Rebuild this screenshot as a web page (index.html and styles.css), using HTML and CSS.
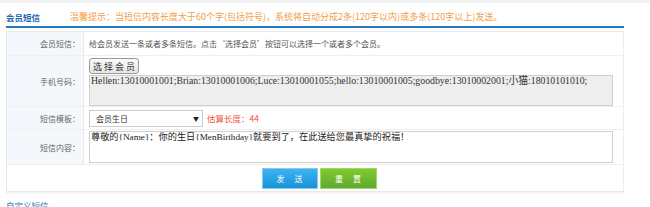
FILE: index.html
```html
<!DOCTYPE html>
<html lang="zh-CN">
<head>
<meta charset="utf-8">
<title>会员短信</title>
<link rel="stylesheet" href="styles.css">
</head>
<body>
<div class="topstrip"></div>
<div class="page">
  <div class="head">
    <span class="head-title">会员短信</span>
    <span class="head-tip">温馨提示：当短信内容长度大于60个字(包括符号)，系统将自动分成2条(120字以内)或多条(120字以上)发送。</span>
  </div>
  <div class="form">
    <div class="row r1">
      <div class="label">会员短信：</div>
      <div class="cell"><span class="desc">给会员发送一条或者多条短信。点击‘选择会员’按钮可以选择一个或者多个会员。</span></div>
    </div>
    <div class="row r2">
      <div class="label">手机号码：</div>
      <div class="cell col">
        <button class="pick">选择会员</button>
        <div class="phones">Hellen:13010001001;Brian:13010001006;Luce:13010001055;hello:13010001005;goodbye:13010002001;小猫:18010101010;</div>
      </div>
    </div>
    <div class="row r3">
      <div class="label">短信模板：</div>
      <div class="cell">
        <div class="select"><span>会员生日</span><span class="arrow">▼</span></div>
        <span class="estimate">估算长度：44</span>
      </div>
    </div>
    <div class="row r4">
      <div class="label">短信内容：</div>
      <div class="cell">
        <div class="content">尊敬的{Name}：你的生日{MenBirthday}就要到了，在此送给您最真挚的祝福！</div>
      </div>
    </div>
    <div class="actions">
      <button class="btn send">发 送</button>
      <button class="btn reset">重 置</button>
    </div>
  </div>
  <div class="more">自定义短信</div>
</div>
</body>
</html>
```
FILE: styles.css
```css
* { box-sizing: border-box; }
html, body { margin: 0; padding: 0; background: #fff; }
body {
  font-family: "Noto Sans CJK SC", "Liberation Sans", sans-serif;
  font-size: 8px;
  color: #555;
  width: 650px;
  height: 207px;
  overflow: hidden;
}
.topstrip { height: 3px; background: #f2f3f5; }
.page { padding-left: 6px; width: 624px; }
.head {
  height: 25px;
  display: flex;
  align-items: center;
  border-bottom: 2px solid #2279bd;
  padding-top: 4px;
}
.head-title {
  color: #1f69ad;
  font-size: 8.5px;
  font-weight: bold;
  width: 64px;
}
.head-tip { color: #f0a04a; font-size: 9px; }
.form {
  margin-top: 3px;
  border: 1px solid #e8e8e8;
  border-right-color: #ececec;
  box-shadow: 0 2px 0 #f5f5f5;
}
.row {
  display: grid;
  grid-template-columns: 77px 1fr;
  border-bottom: 1px solid #efefef;
}
.label {
  background: #f4f8fc;
  border-right: 1px solid #e8e8e8;
  color: #666;
  text-align: right;
  padding-right: 3px;
  display: flex;
  align-items: center;
  justify-content: flex-end;
}
.cell {
  display: flex;
  align-items: center;
  padding-left: 5px;
  padding-right: 10px;
}
.cell.col { flex-direction: column; align-items: flex-start; padding-top: 2px; gap: 1px; }
.r1 { height: 24px; }
.r2 { height: 51px; }
.r3 { height: 23px; }
.r4 { height: 35px; }
.desc { color: #555; }
.pick {
  font-family: "Noto Sans CJK SC", sans-serif;
  font-size: 9px;
  letter-spacing: 2px;
  color: #333;
  height: 16px;
  width: 50px;
  padding: 0 0 0 2px;
  border: 1px solid #999;
  border-radius: 3px;
  background: linear-gradient(#fafafa, #e6e6e6);
  line-height: 13px;
}
.phones {
  width: 524px;
  height: 31px;
  background: #eeeeee;
  border: 1px solid #cfcfcf;
  font-family: "Liberation Serif", "Noto Sans CJK SC", serif;
  font-size: 9.8px;
  color: #333;
  padding: 0 1px;
  line-height: 10px;
  white-space: nowrap;
}
.select {
  width: 114px;
  height: 17px;
  border: 1px solid #ccc;
  background: #fff;
  display: flex;
  align-items: center;
  justify-content: space-between;
  padding: 0 3px 0 6px;
  color: #333;
}
.arrow { font-size: 6px; color: #222; }
.estimate { color: #f2543a; margin-left: 4px; font-size: 8.5px; }
.content {
  width: 524px;
  height: 32px;
  border: 1px solid #cfcfcf;
  background: #fff;
  font-family: "Liberation Serif", "Noto Sans CJK SC", serif;
  font-size: 9.2px;
  color: #222;
  padding: 0 1px;
  line-height: 11px;
}
.actions {
  height: 26px;
  display: flex;
  justify-content: center;
  align-items: center;
  gap: 2px;
  padding-left: 8px;
}
.btn {
  width: 56px;
  height: 21px;
  border: 1px solid transparent;
  color: #fff;
  font-family: "Noto Sans CJK SC", sans-serif;
  font-size: 8px;
  letter-spacing: 4px;
  padding: 0 0 0 4px;
}
.send { background: linear-gradient(#3db4f2, #1592d6); border-color: #8cc9ef; }
.reset { background: linear-gradient(#7dcc2c, #62a832); border-color: #9fd86a; width: 57px; }
.more {
  margin-top: 8px;
  color: #2a7dc4;
  font-size: 8.5px;
  line-height: 10px;
}
```
